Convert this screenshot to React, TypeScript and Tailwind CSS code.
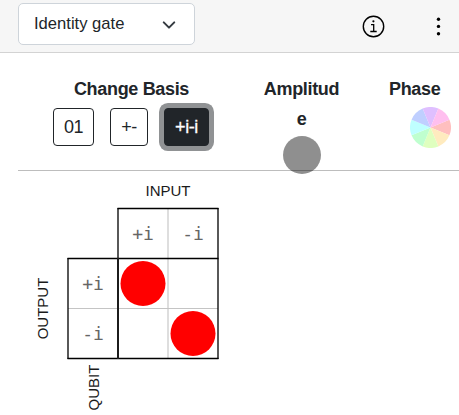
import React, { useState } from "react";

const bases = [
  { label: "01", className: "w-[41px]" },
  { label: "+-", className: "w-[38px]" },
  { label: "+i-i", className: "w-[45px]" },
];

const phaseColors = [
  "#ffbfbf",
  "#ffebbf",
  "#dfffbf",
  "#bfffcf",
  "#bfffff",
  "#bfcfff",
  "#dfbfff",
  "#ffbfef",
];

const PhaseWheel: React.FC = () => {
  const point = (deg: number) => {
    const rad = (deg * Math.PI) / 180;
    return `${20.5 + 20.5 * Math.cos(rad)} ${20.5 + 20.5 * Math.sin(rad)}`;
  };

  return (
    <svg width="41" height="41" viewBox="0 0 41 41" className="block">
      {phaseColors.map((color, i) => (
        <path
          key={color}
          fill={color}
          d={`M20.5 20.5 L${point(i * 45 - 22.5)} A20.5 20.5 0 0 1 ${point(i * 45 + 22.5)} Z`}
        />
      ))}
    </svg>
  );
};

const GateMatrix: React.FC = () => (
  <svg width="240" height="244" viewBox="0 171 240 244" className="block">
    <g fill="red">
      <circle cx="143" cy="283.5" r="22.5" />
      <circle cx="193" cy="333.5" r="22.5" />
    </g>
    <path d="M168 209V358" stroke="#dedede" strokeWidth="2" />
    <path d="M68 308.5H218" stroke="#c4c4c4" />
    <g fill="none" stroke="#000" strokeWidth="1.3">
      <path d="M117.5 208.5H218.5M67.5 258.5H218.5M67.5 358.5H218.5" />
      <path d="M118 208V359M218 208V359M68 258V359" />
    </g>
    <path d="M118 258V359" stroke="#1c1c1c" strokeWidth="2" />
    <g
      fill="#666"
      textAnchor="middle"
      className="font-['DejaVu_Sans_Mono',monospace] text-[18px]"
    >
      <text x="143" y="239.5">+i</text>
      <text x="193" y="239.5">-i</text>
      <text x="93" y="289.5">+i</text>
      <text x="93" y="339.5">-i</text>
    </g>
    <g
      fill="#1a1a1a"
      className="font-['Liberation_Sans',Arial,sans-serif] text-[15px]"
    >
      <text x="145.5" y="196">
        INPUT
      </text>
      <text transform="translate(48 339.3) rotate(-90)">OUTPUT</text>
      <text transform="translate(99 410.5) rotate(-90)">QUBIT</text>
    </g>
  </svg>
);

const App: React.FC = () => {
  const [basis, setBasis] = useState<string>("+i-i");

  return (
    <div className="h-[415px] w-[459px] overflow-hidden bg-white font-['Liberation_Sans',Arial,sans-serif] text-[#212529]">
      <header className="flex h-[53px] items-start border-b border-[#d3d3d3] bg-[#f6f6f6] pl-[18px] pt-[3px]">
        <button className="flex h-[42px] w-[177px] items-center justify-between rounded-[5px] border border-[#ced4da] bg-white pl-[15px] pr-[18px] pt-px text-[16.6px]">
          Identity gate
          <svg width="14" height="14" viewBox="0 0 16 16" fill="none">
            <path
              d="m2 5 6 6 6-6"
              stroke="#343a40"
              strokeWidth="2.3"
              strokeLinecap="round"
              strokeLinejoin="round"
            />
          </svg>
        </button>
        <button className="ml-[166px] mt-[11px]" aria-label="Info">
          <svg width="24" height="24" viewBox="0 0 24 24" fill="none">
            <circle cx="12.5" cy="12.5" r="10.2" stroke="#000" strokeWidth="1.4" />
            <path
              d="M10 10.6h2.7v6.5M9.3 17.5h6.4"
              stroke="#000"
              strokeWidth="1.3"
            />
            <circle cx="12.4" cy="7.3" r="1.1" fill="#000" />
          </svg>
        </button>
        <button className="ml-[45px] mt-[13px]" aria-label="More">
          <svg width="16" height="22" viewBox="0 0 16 22">
            <circle cx="8.5" cy="3.2" r="1.7" />
            <circle cx="8.5" cy="10.4" r="1.7" />
            <circle cx="8.5" cy="17.7" r="1.7" />
          </svg>
        </button>
      </header>

      <section className="ml-[18px] flex h-[118px] border-b border-[#bdbdbd] pt-[21px]">
        <div className="w-[227px] pl-[35px]">
          <h2 className="w-[157px] text-center text-lg font-bold leading-[30px] tracking-[-0.33px]">
            Change Basis
          </h2>
          <div className="mt-1 flex gap-4">
            {bases.map(({ label, className }) => (
              <button
                key={label}
                onClick={() => setBasis(label)}
                className={`${className} h-[38px] rounded-[4px] border border-[#212529] text-center text-lg tracking-[-0.4px] ${
                  basis === label
                    ? "bg-[#212529] text-white ring-[5px] ring-[#909294] [-webkit-text-stroke:0.3px_white]"
                    : ""
                }`}
              >
                {label}
              </button>
            ))}
          </div>
        </div>
        <div className="ml-[18px] flex w-[77px] shrink-0 flex-col items-center">
          <h2 className="w-[77px] break-all text-center text-lg font-bold leading-[30px] tracking-[-0.33px]">
            Amplitude
          </h2>
          <div className="mt-[2px] h-[38px] w-[38px] shrink-0 rounded-full bg-black/44" />
        </div>
        <div className="ml-[48px] w-[70px] shrink-0">
          <h2 className="pl-px text-lg font-bold leading-[30px] tracking-[-0.33px]">
            Phase
          </h2>
          <div className="ml-[22px] mt-[3px]">
            <PhaseWheel />
          </div>
        </div>
      </section>

      <GateMatrix />
    </div>
  );
};

export default App;
